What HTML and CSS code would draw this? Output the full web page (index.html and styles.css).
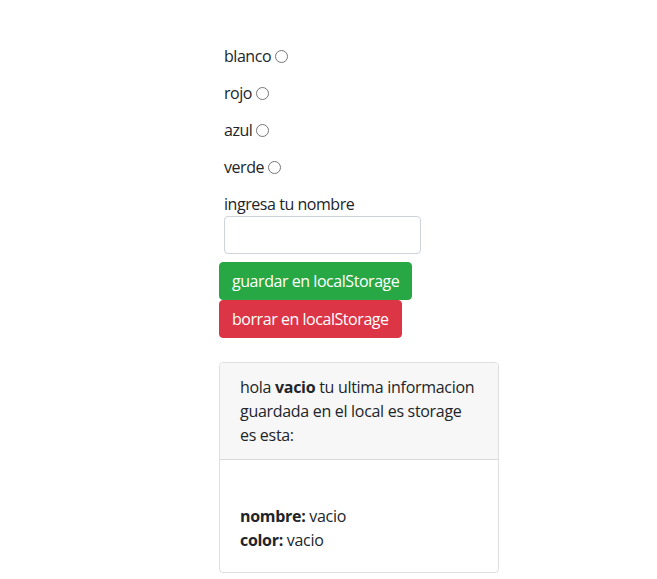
FILE: index.html
```html
<!DOCTYPE html>
<html lang="es">
<head>
<meta charset="utf-8">
<title>localStorage</title>
<link rel="stylesheet" href="styles.css">
</head>
<body>
<main class="wrap">
  <form class="form">
    <div class="opt"><label>blanco <input type="radio" name="color" value="blanco"></label></div>
    <div class="opt"><label>rojo <input type="radio" name="color" value="rojo"></label></div>
    <div class="opt"><label>azul <input type="radio" name="color" value="azul"></label></div>
    <div class="opt"><label>verde <input type="radio" name="color" value="verde"></label></div>
    <div class="field">
      <label class="field-label" for="nombre">ingresa tu nombre</label>
      <input class="text-input" id="nombre" type="text">
    </div>
    <div class="actions">
      <button type="button" class="btn btn-success">guardar en localStorage</button>
      <button type="button" class="btn btn-danger">borrar en localStorage</button>
    </div>
  </form>
  <section class="card">
    <div class="card-header">hola <b>vacio</b> tu ultima informacion guardada en el local es storage es esta:</div>
    <div class="card-body">
      <br>
      <b>nombre:</b> vacio<br>
      <b>color:</b> vacio
    </div>
  </section>
</main>
</body>
</html>
```

FILE: styles.css
```css
* { box-sizing: border-box; }
html, body { margin: 0; padding: 0; background: #fff; }
body {
  font-family: "Open Sans", "Noto Sans", sans-serif;
  font-size: 16px;
  line-height: 24px;
  color: #212529;
  letter-spacing: -0.45px;
}
.wrap {
  padding: 46px 0 0 219px;
  width: 500px;
}
.form {
  display: flex;
  flex-direction: column;
  align-items: flex-start;
}
.opt {
  padding-left: 5px;
  line-height: 21px;
  margin-bottom: 16px;
}
.opt input[type="radio"] {
  margin: 0;
  width: 13px;
  height: 13px;
  vertical-align: -1px;
}
.field {
  padding-left: 5px;
  display: flex;
  flex-direction: column;
  align-items: flex-start;
}
.field-label {
  line-height: 21px;
  margin-bottom: 1px;
}
.text-input {
  width: 197px;
  height: 38px;
  border: 1px solid #ced4da;
  border-radius: 4px;
  padding: 6px 12px;
  font: inherit;
  margin: 0;
}
.actions {
  margin-top: 8px;
  display: flex;
  flex-direction: column;
  align-items: flex-start;
}
.btn {
  font: inherit;
  letter-spacing: inherit;
  color: #fff;
  border: 1px solid transparent;
  border-radius: 4px;
  padding: 6px 12px;
  height: 38px;
  line-height: 24px;
  cursor: pointer;
  margin: 0;
}
.btn-success { background: #28a745; border-color: #28a745; }
.btn-danger { background: #dc3545; border-color: #dc3545; }
.card {
  margin-top: 24px;
  width: 280px;
  border: 1px solid rgba(0,0,0,.125);
  border-radius: 4px;
  overflow: hidden;
  letter-spacing: -0.3px;
}
.card-header {
  background: #f7f7f7;
  padding: 12px 20px;
  border-bottom: 1px solid rgba(0,0,0,.125);
}
.card-body {
  padding: 20px;
}
b { font-weight: 700; }
```
